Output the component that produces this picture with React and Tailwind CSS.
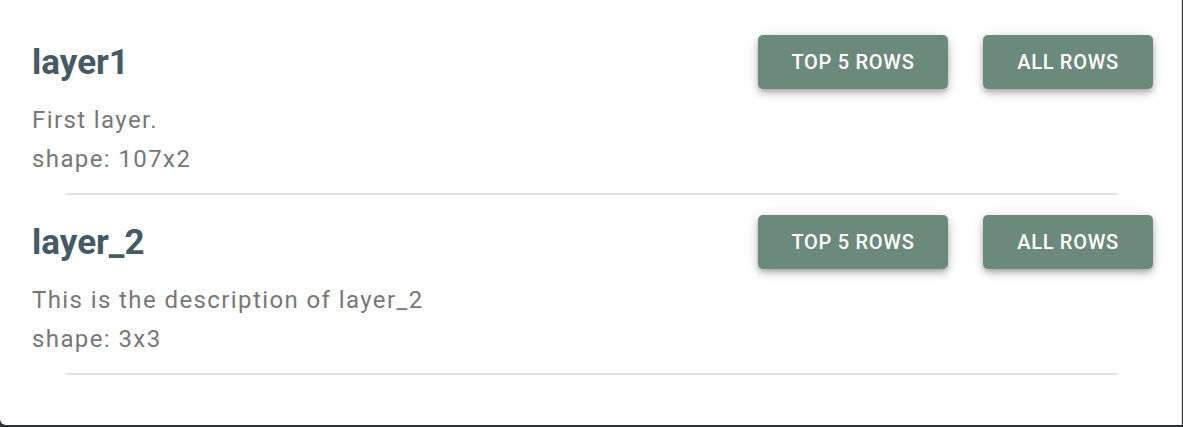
import React from 'react';

const layers = [
    { name: 'layer1', description: 'First layer.', shape: '107x2' },
    { name: 'layer_2', description: 'This is the description of layer_2', shape: '3x3' },
];

const RowButton = ({ children, width }) => (
    <button className={`${width} h-[54px] rounded-[5px] bg-[#6b8a7b] text-white text-[20px] font-medium tracking-[0.036em] shadow-[0_3px_5px_-1px_rgba(0,0,0,0.2),0_5px_8px_0_rgba(0,0,0,0.14),0_1px_14px_0_rgba(0,0,0,0.12)]`}>
        {children}
    </button>
);

const LayerItem = ({ layer }) => (
    <div>
        <div className="pt-5 pl-8 pr-7">
            <div className="flex items-center justify-between">
                <h2 className="text-[35px] font-bold text-[#455a64] leading-none">{layer.name}</h2>
                <div className="flex gap-[35px]">
                    <RowButton width="w-[190px]">TOP 5 ROWS</RowButton>
                    <RowButton width="w-[170px]">ALL ROWS</RowButton>
                </div>
            </div>
            <div className="mt-3 text-[24px] leading-[39px] text-[#777777] tracking-[1.4px]">
                <p>{layer.description}</p>
                <p>shape: {layer.shape}</p>
            </div>
        </div>
        <div className="mt-[14px] ml-[65px] w-[1053px] h-[2px] bg-[#e2e2e2]" />
    </div>
);

export default function App() {
    return (
        <div className="w-[1183px] h-[427px] bg-[#2e3236] overflow-hidden" style={{ fontFamily: 'Roboto, "Liberation Sans", sans-serif' }}>
            <div className="w-[1182px] h-[425px] bg-white rounded-bl-[6px] border-r border-[#e4e4e4] pt-[15px]">
                {layers.map((layer) => (
                    <LayerItem key={layer.name} layer={layer} />
                ))}
            </div>
        </div>
    );
}
